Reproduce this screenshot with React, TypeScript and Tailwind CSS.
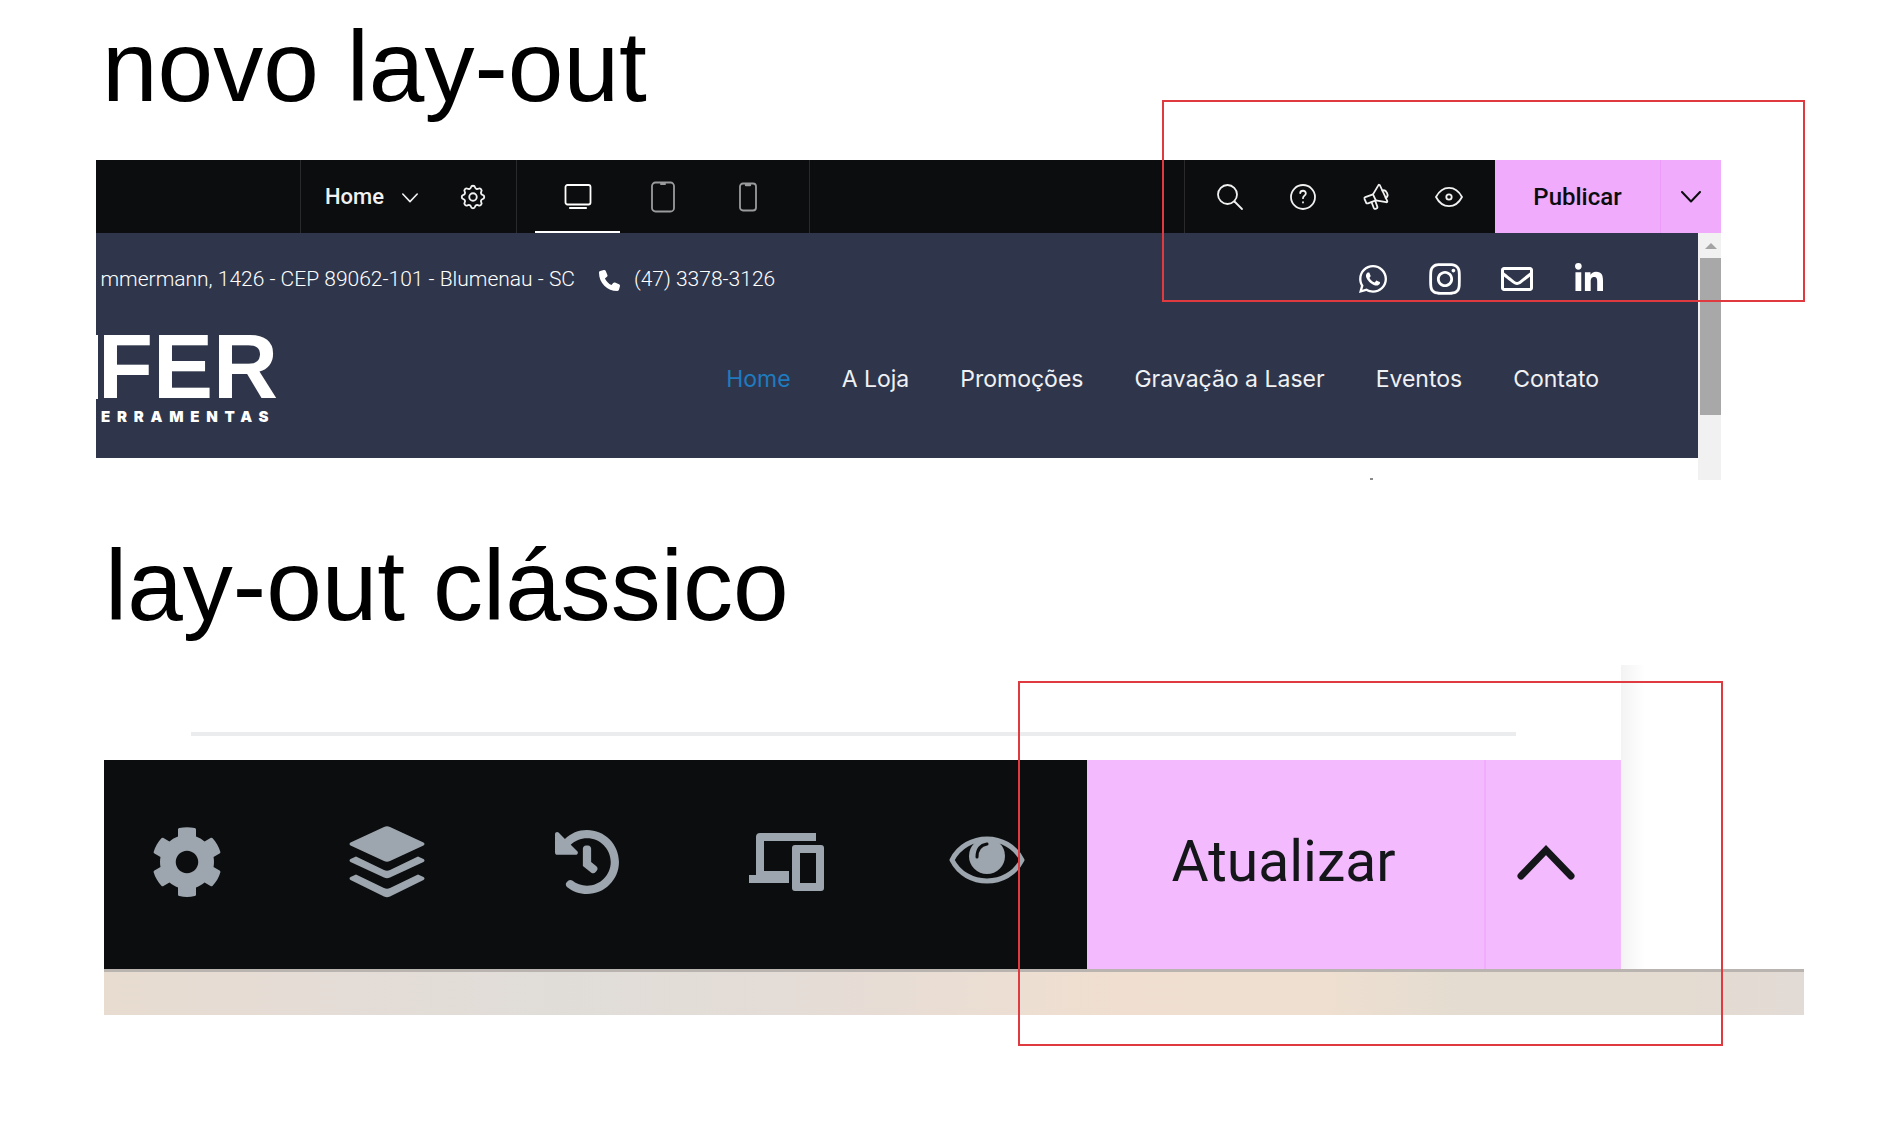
import type { ReactNode } from "react";
import { FaCog, FaHistory, FaRegEnvelope } from "react-icons/fa";
import { FaInstagram, FaLinkedinIn, FaPhone, FaWhatsapp } from "react-icons/fa6";
import { TbSettings } from "react-icons/tb";

const navLinks = ["Home", "A Loja", "Promoções", "Gravação a Laser", "Eventos", "Contato"];

type IconProps = { className?: string };

function Stroke({ className, children, viewBox = "0 0 28 28" }: IconProps & { children: ReactNode; viewBox?: string }) {
  return (
    <svg
      viewBox={viewBox}
      fill="none"
      stroke="currentColor"
      strokeWidth="1.8"
      strokeLinecap="round"
      strokeLinejoin="round"
      className={className}
      aria-hidden="true"
    >
      {children}
    </svg>
  );
}

function DesktopIcon() {
  return (
    <Stroke className="size-7">
      <rect x="1.5" y="2" width="25" height="19.5" rx="2" />
      <path d="M6 25h16" strokeWidth="2.2" />
    </Stroke>
  );
}

function TabletIcon() {
  return (
    <Stroke viewBox="0 0 24 32" className="h-8 w-6">
      <rect x="1" y="1.5" width="22" height="29" rx="3.5" />
      <path d="M10 3h4" strokeWidth="2" />
    </Stroke>
  );
}

function PhoneIcon() {
  return (
    <Stroke viewBox="0 0 18 30" className="h-[30px] w-[18px]">
      <rect x="1" y="1.5" width="16" height="27" rx="3" />
      <path d="M7 3h4" strokeWidth="2.4" />
    </Stroke>
  );
}

function SearchIcon() {
  return (
    <Stroke className="size-7">
      <circle cx="11.5" cy="11.5" r="9.5" />
      <path d="M18.5 18.5 26 26" />
    </Stroke>
  );
}

function HelpIcon() {
  return (
    <Stroke className="size-7">
      <circle cx="14" cy="14" r="12" />
      <path d="M11.2 10.2c.3-3.4 5.8-3.2 5.6.3-.1 2.2-2.8 2.1-2.8 4.7M14 19.2v.3" />
    </Stroke>
  );
}

function MegaphoneIcon() {
  return (
    <Stroke className="size-7">
      <path d="M3.3 14.2 11 11.4 16.3 2.4c.5-.9 1.3-.8 1.7.1l7.2 15.3c.4.9-.1 1.6-1.1 1.4L13.8 17.4 6 20.3c-1 .4-1.7 0-2-.9l-1.5-3.6c-.3-.8 0-1.3.8-1.6Z" />
      <path d="m11 11.4 2.8 6M9.5 19l2.3 6c.3.8 1 1.1 1.8.8l1-.4c.8-.3 1-1 .7-1.8l-2.1-5.8M20.4 7.6c3.7-1.7 7.4 5.2 3.2 7.3" />
    </Stroke>
  );
}

function EyeIcon() {
  return (
    <Stroke className="size-7">
      <path d="M1 14C7.4 1.8 20.6 1.8 27 14 20.6 26.2 7.4 26.2 1 14Z" />
      <circle cx="14" cy="14" r="2.7" />
    </Stroke>
  );
}

function Chevron({ className }: IconProps) {
  return (
    <Stroke viewBox="0 0 20 12" className={className}>
      <path d="m1 1 9 9.5L19 1" strokeWidth="2" />
    </Stroke>
  );
}

function LayersIcon() {
  return (
    <svg viewBox="0 0 76 72" className="w-[76px]" fill="currentColor" aria-hidden="true">
      <path d="M1.5 16.5 35 1q3-1.3 6 0l33.5 15.5q2 1.5 0 3L41 35q-3 1.4-6 0L1.5 19.5q-2-1.5 0-3Z" />
      <path d="M1.5 33 7 30.5 35 44q3 1.3 6 0l28-13.5 5.5 2.5q2 1.5 0 3L41 51.5q-3 1.4-6 0L1.5 36q-2-1.5 0-3Z" />
      <path d="M1.5 51 7 48.5 35 62q3 1.3 6 0l28-13.5 5.5 2.5q2 1.5 0 3L41 70.5q-3 1.4-6 0L1.5 54q-2-1.5 0-3Z" />
    </svg>
  );
}

function DevicesIcon() {
  return (
    <svg viewBox="0 0 76 58" className="w-[76px]" fill="currentColor" fillRule="evenodd" aria-hidden="true">
      <path d="M11 0h56v8H15v30h25v12H0v-8h7V4q0-4 4-4Z" />
      <path d="M46 12h26q3 0 3 3v40q0 3-3 3H46q-3 0-3-3V15q0-3 3-3Zm5 8v30h16V20Z" />
    </svg>
  );
}

function PreviewIcon() {
  return (
    <svg viewBox="0 0 76 50" className="mb-1 w-[76px]" fill="none" stroke="currentColor" aria-hidden="true">
      <path d="M3 25C17-3 59-3 73 25 59 53 17 53 3 25Z" strokeWidth="5" strokeLinejoin="round" />
      <circle cx="38" cy="21" r="18" fill="currentColor" stroke="none" />
      <path d="M28 22c0-8 4-12 10-13" stroke="#0c0d0e" strokeWidth="3" strokeLinecap="round" />
    </svg>
  );
}

function ToolButton({ label, children }: { label: string; children: ReactNode }) {
  return (
    <button type="button" aria-label={label} className="flex w-[73px] items-center justify-center">
      {children}
    </button>
  );
}

function DeviceButton({ label, active, children }: { label: string; active?: boolean; children: ReactNode }) {
  return (
    <button
      type="button"
      aria-label={label}
      aria-pressed={!!active}
      className={`flex w-[85px] items-center justify-center border-y-2 border-transparent ${active ? "border-b-white text-white" : "text-[#9a9b9c]"}`}
    >
      {children}
    </button>
  );
}

function EditorBar() {
  return (
    <div className="flex h-[73px] bg-[#0c0d0e] text-[#f1f1f1]">
      <div className="w-[205px] shrink-0 border-r border-[#2a2a2c]" />
      <div className="flex w-[216px] shrink-0 items-center border-r border-[#2a2a2c] pl-6">
        <button type="button" className="flex items-center gap-[18px] text-[22px] font-medium">
          Home
          <Chevron className="mt-0.5 h-[10px] w-4" />
        </button>
        <button type="button" aria-label="Configurações" className="ml-10">
          <TbSettings className="size-[30px]" strokeWidth={1.5} />
        </button>
      </div>
      <div className="flex w-[293px] shrink-0 border-r border-[#2a2a2c] pl-[18px]">
        <DeviceButton label="Desktop" active>
          <DesktopIcon />
        </DeviceButton>
        <DeviceButton label="Tablet">
          <TabletIcon />
        </DeviceButton>
        <DeviceButton label="Celular">
          <PhoneIcon />
        </DeviceButton>
      </div>
      <div className="flex-1" />
      <div className="flex shrink-0 border-l border-[#2a2a2c] pr-[10px] pl-2">
        <ToolButton label="Pesquisar">
          <SearchIcon />
        </ToolButton>
        <ToolButton label="Ajuda">
          <HelpIcon />
        </ToolButton>
        <ToolButton label="Novidades">
          <MegaphoneIcon />
        </ToolButton>
        <ToolButton label="Visualizar">
          <EyeIcon />
        </ToolButton>
      </div>
      <div className="flex shrink-0 bg-[#f0abfc] text-[#0c0d0e]">
        <button type="button" className="w-[166px] border-r border-[#eb9bf9] text-[24px] leading-8 font-medium">
          Publicar
        </button>
        <button type="button" aria-label="Opções de publicação" className="flex w-[60px] items-center justify-center">
          <Chevron className="h-3 w-5" />
        </button>
      </div>
    </div>
  );
}

function SiteHeader() {
  return (
    <header className="h-[225px] bg-[#2f364b] text-white">
      <div className="flex h-[92px] items-center justify-between pr-[73px]">
        <div className="flex items-center pt-0.5 text-[21px] font-light">
          <span className="flex w-[479px] justify-end whitespace-nowrap">
            mmermann, 1426 - CEP 89062-101 - Blumenau - SC
          </span>
          <FaPhone className="ml-6 mr-[14px] size-[21px]" />
          <span className="whitespace-nowrap">(47) 3378-3126</span>
        </div>
        <div className="flex items-center">
          <a href="#whatsapp" aria-label="WhatsApp" className="flex w-[72px] justify-center">
            <FaWhatsapp className="size-8" />
          </a>
          <a href="#instagram" aria-label="Instagram" className="flex w-[72px] justify-center">
            <FaInstagram className="size-9" />
          </a>
          <a href="#email" aria-label="E-mail" className="flex w-[72px] justify-center">
            <FaRegEnvelope className="size-8" />
          </a>
          <a href="#linkedin" aria-label="LinkedIn" className="flex w-[72px] justify-center">
            <FaLinkedinIn className="size-8" />
          </a>
        </div>
      </div>
      <div className="flex items-start justify-between pr-[99px]">
        <div className="flex w-[178px] flex-col pt-[10px] font-bold whitespace-nowrap">
          <div className="flex justify-between border-l-2 border-white font-['Liberation_Sans',Arial,sans-serif] text-[90px] leading-[64px]">
            <span>FER</span>
          </div>
          <span className="mt-[10px] ml-[5px] font-['Inter',sans-serif] text-[15px] leading-4 font-black tracking-[0.45em]">
            ERRAMENTAS
          </span>
        </div>
        <nav className="flex gap-[51px] pt-[38px] font-['Inter',sans-serif] text-[23px] leading-8">
          {navLinks.map((link) => (
            <a key={link} href="#" className={link === "Home" ? "text-[#1f7bbf]" : "text-[#f0f1f4]"}>
              {link}
            </a>
          ))}
        </nav>
      </div>
    </header>
  );
}

function NewLayout() {
  return (
    <section className="relative mt-11 ml-24 mr-[174px] font-['Roboto',sans-serif]">
      <EditorBar />
      <div className="flex">
        <div className="min-w-0 flex-1">
          <SiteHeader />
          <div className="flex h-[22px] items-end pl-[79%]">
            <div className="ml-2 h-0.5 w-[3px] bg-[#8a8a8a]" />
          </div>
        </div>
        <div className="flex h-[247px] w-[23px] flex-col items-end bg-[#f1f1f1]">
          <div className="flex h-[25px] w-[21px] items-center justify-center">
            <div className="border-x-[6px] border-b-[6px] border-x-transparent border-b-[#a3a3a3]" />
          </div>
          <div className="h-[157px] w-[21px] bg-[#a8a8a8]" />
        </div>
      </div>
      <div className="pointer-events-none absolute -top-[60px] -right-[84px] h-[202px] w-[643px] border-2 border-[#de3a40]" />
    </section>
  );
}

function PanelButton({ label, children }: { label: string; children: ReactNode }) {
  return (
    <button type="button" aria-label={label} className="flex w-[76px] items-center justify-center text-[#9da5ae]">
      {children}
    </button>
  );
}

function ClassicLayout() {
  return (
    <section className="relative mt-[30px] ml-[104px] mr-[91px]">
      <div className="flex">
        <div className="flex-1">
          <div className="h-[95px] pt-[67px] pr-[105px] pl-[87px]">
            <hr className="border-t-4 border-[#ebecee]" />
          </div>
          <div className="flex h-[209px] bg-[#0c0d0e]">
            <div className="flex flex-1 justify-between pr-[62px] pl-[45px] pb-1.5">
              <PanelButton label="Configurações">
                <FaCog className="size-[72px]" />
              </PanelButton>
              <PanelButton label="Estrutura">
                <LayersIcon />
              </PanelButton>
              <PanelButton label="Histórico">
                <FaHistory className="size-[66px]" />
              </PanelButton>
              <PanelButton label="Modo responsivo">
                <DevicesIcon />
              </PanelButton>
              <PanelButton label="Visualizar">
                <PreviewIcon />
              </PanelButton>
            </div>
            <div className="flex bg-[#f3bafd] text-[#15161a]">
              <button
                type="button"
                className="w-[399px] border-r-2 border-[#efadfb] pr-1 pb-1.5 font-['Roboto',sans-serif] text-[57px]"
              >
                Atualizar
              </button>
              <button type="button" aria-label="Opções para salvar" className="flex w-[135px] items-center justify-center pr-4 pb-1.5">
                <Stroke viewBox="0 0 60 38" className="w-[60px]">
                  <path d="M5 33 30 7l25 26" strokeWidth="7" strokeLinejoin="miter" />
                </Stroke>
              </button>
            </div>
          </div>
        </div>
        <div className="w-[183px]">
          <div className="h-full w-6 bg-linear-to-r from-[#f3f3f3] to-white" />
        </div>
      </div>
      <div className="h-[46px] border-t-[3px] border-[#b9b4af] bg-[linear-gradient(90deg,#e8dcd0_0%,#e5dcd6_12%,#e0ddd8_27%,#e5dcd6_42%,#f0dfd0_60%,#eedfd0_72%,#e4dcd1_80%,#e4dbd1_93%,#e2dad5_100%)]" />
      <div className="pointer-events-none absolute top-4 right-[81px] h-[365px] w-[705px] border-2 border-[#de3a40]" />
    </section>
  );
}

export default function App() {
  return (
    <main className="min-h-screen min-w-[1500px] bg-white pt-4 font-['Liberation_Sans',Arial,sans-serif] text-black">
      <h1 className="ml-[102px] text-[100px] leading-[100px]">novo lay-out</h1>
      <NewLayout />
      <h2 className="mt-[55px] ml-[105px] text-[100px] leading-[100px]">lay-out clássico</h2>
      <ClassicLayout />
    </main>
  );
}
